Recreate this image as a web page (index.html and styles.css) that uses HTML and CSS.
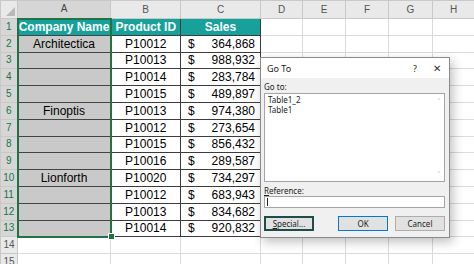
FILE: index.html
```html
<!DOCTYPE html>
<html lang="en">
<head>
  <meta charset="UTF-8" />
  <title>Go To – Sales Sheet</title>
  <link rel="stylesheet" href="styles.css">
</head>
<body>

  <table class="sheet">
    <colgroup>
      <col style="width:17px"><col style="width:93px"><col style="width:70px"><col style="width:80px">
      <col style="width:42px"><col style="width:43px"><col style="width:43px"><col style="width:44px"><col style="width:42px">
    </colgroup>
    <tr class="letters">
      <th class="corner"><span class="tri"></span></th>
      <th class="on">A</th><th>B</th><th>C</th><th>D</th><th>E</th><th>F</th><th>G</th><th>H</th>
    </tr>
    <tr>
      <th class="rn on">1</th>
      <td class="sel first hd">Company Name</td><td class="tb hd">Product ID</td><td class="tb hd">Sales</td>
      <td></td><td></td><td></td><td></td><td></td>
    </tr>
    <tr>
      <th class="rn on">2</th>
      <td class="sel">Architectica</td><td class="tb">P10012</td>
      <td class="tb"><div class="money"><span>$</span><span>364,868</span></div></td>
      <td></td><td></td><td></td><td></td><td></td>
    </tr>
    <tr>
      <th class="rn on">3</th>
      <td class="sel"></td><td class="tb">P10013</td>
      <td class="tb"><div class="money"><span>$</span><span>988,932</span></div></td>
      <td></td><td></td><td></td><td></td><td></td>
    </tr>
    <tr>
      <th class="rn on">4</th>
      <td class="sel"></td><td class="tb">P10014</td>
      <td class="tb"><div class="money"><span>$</span><span>283,784</span></div></td>
      <td></td><td></td><td></td><td></td><td></td>
    </tr>
    <tr>
      <th class="rn on">5</th>
      <td class="sel"></td><td class="tb">P10015</td>
      <td class="tb"><div class="money"><span>$</span><span>489,897</span></div></td>
      <td></td><td></td><td></td><td></td><td></td>
    </tr>
    <tr>
      <th class="rn on">6</th>
      <td class="sel">Finoptis</td><td class="tb">P10013</td>
      <td class="tb"><div class="money"><span>$</span><span>974,380</span></div></td>
      <td></td><td></td><td></td><td></td><td></td>
    </tr>
    <tr>
      <th class="rn on">7</th>
      <td class="sel"></td><td class="tb">P10012</td>
      <td class="tb"><div class="money"><span>$</span><span>273,654</span></div></td>
      <td></td><td></td><td></td><td></td><td></td>
    </tr>
    <tr>
      <th class="rn on">8</th>
      <td class="sel"></td><td class="tb">P10015</td>
      <td class="tb"><div class="money"><span>$</span><span>856,432</span></div></td>
      <td></td><td></td><td></td><td></td><td></td>
    </tr>
    <tr>
      <th class="rn on">9</th>
      <td class="sel"></td><td class="tb">P10016</td>
      <td class="tb"><div class="money"><span>$</span><span>289,587</span></div></td>
      <td></td><td></td><td></td><td></td><td></td>
    </tr>
    <tr>
      <th class="rn on">10</th>
      <td class="sel">Lionforth</td><td class="tb">P10020</td>
      <td class="tb"><div class="money"><span>$</span><span>734,297</span></div></td>
      <td></td><td></td><td></td><td></td><td></td>
    </tr>
    <tr>
      <th class="rn on">11</th>
      <td class="sel"></td><td class="tb">P10012</td>
      <td class="tb"><div class="money"><span>$</span><span>683,943</span></div></td>
      <td></td><td></td><td></td><td></td><td></td>
    </tr>
    <tr>
      <th class="rn on">12</th>
      <td class="sel"></td><td class="tb">P10013</td>
      <td class="tb"><div class="money"><span>$</span><span>834,682</span></div></td>
      <td></td><td></td><td></td><td></td><td></td>
    </tr>
    <tr>
      <th class="rn on">13</th>
      <td class="sel last"><span class="handle"></span></td><td class="tb">P10014</td>
      <td class="tb"><div class="money"><span>$</span><span>920,832</span></div></td>
      <td></td><td></td><td></td><td></td><td></td>
    </tr>
    <tr>
      <th class="rn">14</th>
      <td></td><td></td><td></td><td></td><td></td><td></td><td></td><td></td>
    </tr>
    <tr>
      <th class="rn">15</th>
      <td></td><td></td><td></td><td></td><td></td><td></td><td></td><td></td>
    </tr>
  </table>

  <div class="dialog">
    <div class="title-bar">
      <span class="title">Go To</span>
      <span class="help">?</span>
      <span class="close">&#x2715;</span>
    </div>
    <div class="dialog-body">
      <div class="label">Go to:</div>
      <div class="listbox">
        <div>Table1_2</div>
        <div>Table1</div>
        <span class="arrow up">&#x2C4;</span>
        <span class="arrow down">&#x2C5;</span>
      </div>
      <div class="label ref"><u>R</u>eference:</div>
      <div class="ref-input"><span class="caret"></span></div>
      <div class="buttons">
        <button class="btn special"><u>S</u>pecial...</button>
        <button class="btn ok">OK</button>
        <button class="btn">Cancel</button>
      </div>
    </div>
  </div>

</body>
</html>
```

FILE: styles.css
```css
body {
  margin: 0;
  font-family: "Liberation Sans", Arial, sans-serif;
  background: #fff;
  width: 474px;
  height: 264px;
  overflow: hidden;
  position: relative;
}

/* spreadsheet grid */
.sheet {
  border-collapse: collapse;
  table-layout: fixed;
  width: 474px;
  font-size: 12px;
  color: #000;
}

.sheet tr {
  height: 16.8px;
}

.sheet tr.letters {
  height: 18px;
}

.sheet td,
.sheet th {
  border: 1px solid #dadada;
  padding: 0;
  line-height: 14px;
  text-align: center;
  white-space: nowrap;
  overflow: hidden;
}

.sheet th {
  background: #e9e9e9;
  color: #555;
  font-weight: normal;
  font-size: 10px;
  border-color: #c8c8c8;
}

.sheet th.on {
  background: #d6d6d6;
  color: #217346;
}

.letters th.on {
  color: #444;
  border-bottom: 2px solid #217346;
}

.corner {
  position: relative;
}

.tri {
  position: absolute;
  right: 2px;
  bottom: 2px;
  border-left: 9px solid transparent;
  border-bottom: 9px solid #b9b9b9;
}

.rn {
  font-size: 10px;
}

.tb {
  border: 1px solid #3c3c3c !important;
}

.sel {
  background: #c9c9c9;
  border-top: 1px solid #444 !important;
  border-bottom: 1px solid #444 !important;
  border-left: 2px solid #217346 !important;
  border-right: 2px solid #217346 !important;
}

.sel.first {
  border-top: 2px solid #217346 !important;
}

.sel.last {
  border-bottom: 2px solid #217346 !important;
  position: relative;
  overflow: visible;
}

.handle {
  position: absolute;
  right: -5px;
  bottom: -4px;
  width: 5px;
  height: 5px;
  background: #217346;
  border: 1px solid #fff;
}

.hd {
  background: #16a19b;
  color: #fff;
  font-weight: bold;
}

.money {
  display: flex;
  justify-content: space-between;
  padding: 0 5px 0 7px;
}

/* Go To dialog */
.dialog {
  position: absolute;
  left: 260px;
  top: 57px;
  width: 190px;
  height: 181px;
  box-sizing: border-box;
  border: 1px solid #8a8a8a;
  background: #f0f0f0;
  box-shadow: 3px 4px 10px rgba(0, 0, 0, 0.25);
  font-family: "Noto Sans", "Open Sans", sans-serif;
  font-size: 8px;
  color: #222;
  display: flex;
  flex-direction: column;
}

.title-bar {
  height: 20px;
  background: #fff;
  display: flex;
  align-items: center;
  padding: 0 6px;
  font-size: 9px;
}

.title {
  flex: 1;
}

.help {
  width: 20px;
  font-size: 9px;
}

.close {
  width: 10px;
  font-size: 10px;
  color: #333;
}

.dialog-body {
  padding: 2px 4px 0 3px;
  display: flex;
  flex-direction: column;
}

.label {
  height: 13px;
  line-height: 13px;
}

.listbox {
  position: relative;
  height: 89px;
  box-sizing: border-box;
  border: 1px solid #a5a5a5;
  background: #fff;
  padding: 1px 3px;
  line-height: 10px;
}

.arrow {
  position: absolute;
  right: 4px;
  color: #b0b0b0;
  font-size: 8px;
}

.arrow.up {
  top: 3px;
}

.arrow.down {
  bottom: 1px;
}

.label.ref {
  margin-top: 2px;
  height: 12px;
}

.ref-input {
  height: 12px;
  box-sizing: border-box;
  border: 1px solid #a5a5a5;
  background: #fff;
  padding: 1px 2px;
}

.caret {
  display: block;
  width: 1px;
  height: 8px;
  background: #222;
}

.buttons {
  display: flex;
  margin-top: 8px;
  gap: 7px;
}

.btn {
  width: 50px;
  height: 15px;
  box-sizing: border-box;
  border: 1px solid #adadad;
  background: #e1e1e1;
  font-family: inherit;
  font-size: 8px;
  color: #222;
  padding: 0;
}

.btn.special {
  border: 2px solid #1c4d49;
  margin-right: 17px;
}

.btn.ok {
  border-color: #0078d7;
}
```
